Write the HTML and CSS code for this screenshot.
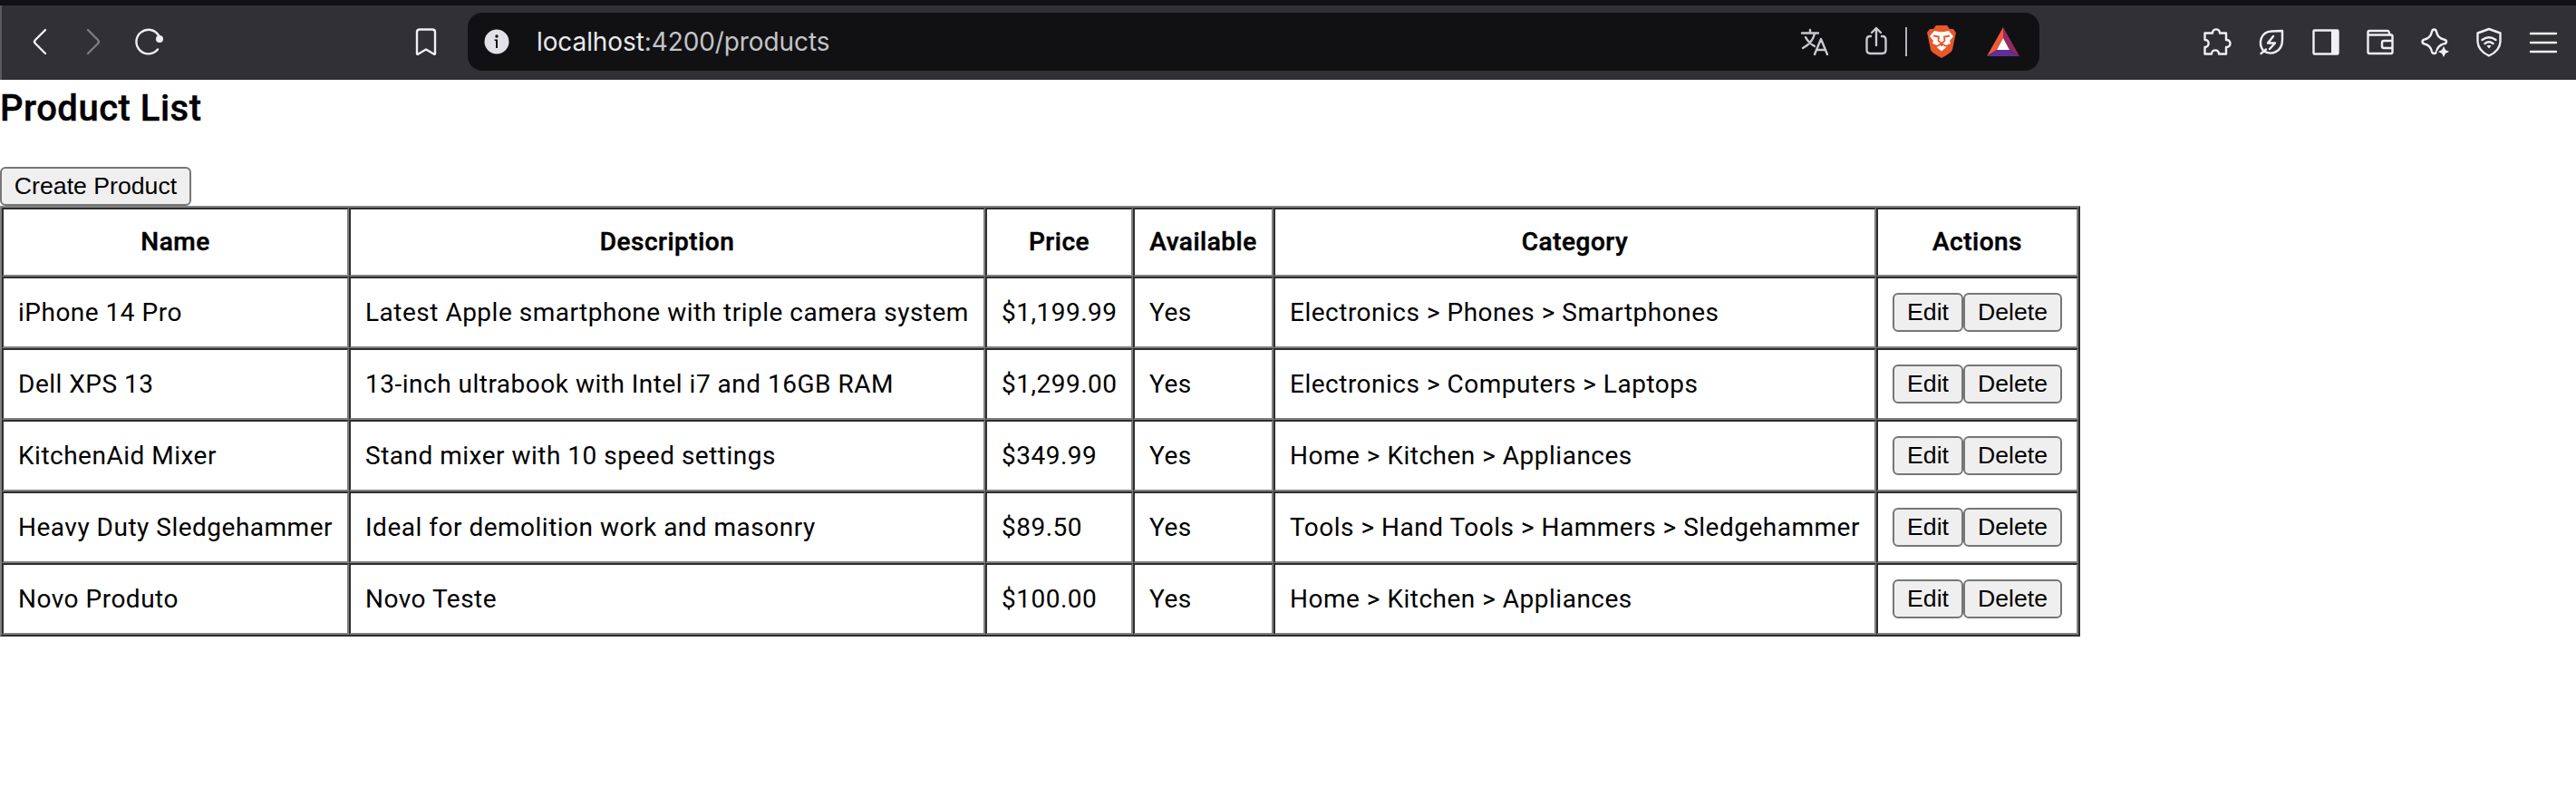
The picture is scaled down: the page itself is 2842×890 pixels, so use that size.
FILE: index.html
```html
<!DOCTYPE html>
<html lang="en">
<head>
<meta charset="utf-8">
<title>Product List</title>
<link rel="stylesheet" href="styles.css">
</head>
<body>
<header class="toolbar">
  <div class="nav">
    <svg class="icon" viewBox="0 0 36 36"><path d="M24 6L13 17Q11 19 13 21L24 32" transform="translate(0 -1)"/></svg>
    <svg class="icon dim" viewBox="0 0 36 36"><path d="M11 5L22 16Q24 18 22 20L11 31"/></svg>
    <svg class="icon" viewBox="0 0 36 36"><path d="M29 11A13.300 13.300 0 1 0 28 26.500"/><circle class="fill" cx="30" cy="15" r="4"/></svg>
  </div>
  <svg class="icon bookmark" viewBox="0 0 36 36"><path d="M8 7.500Q8 4.500 11 4.500H25Q28 4.500 28 7.500V31Q28 32.500 26.500 31.500L18 26.500L9.500 31.500Q8 32.500 8 31Z"/></svg>
  <div class="address">
    <svg class="info" viewBox="0 0 28 28"><circle cx="14" cy="14" r="13.500"/><circle class="dark" cx="14" cy="8" r="1.700"/><path class="dark" d="M11.500 11.500H15V21H13V13H11.500Z"/></svg>
    <span class="url"><b>localhost</b>:4200/products</span>
    <svg class="icon translate" viewBox="0 0 36 36"><path d="M4 8.500H22M13 5V8.500M8 13Q11 19 18 23M18 9Q16 19 5 25M18 32L25 15L32 32M20.500 27H29.500"/></svg>
    <svg class="icon share" viewBox="0 0 36 36"><path d="M12 12H11Q7.500 12 7.500 16V27Q7.500 31 11.500 31H24.500Q28.500 31 28.500 27V16Q28.500 12 25 12H24M18 22V3M13 8L18 3L23 8"/></svg>
    <span class="divider"></span>
    <svg class="lion" viewBox="0 0 32 36"><path fill="#e9582b" d="M10 0H22L25 4L29 4L32 8L31 12L28 27Q27 30 16 36Q5 30 4 27L1 12L0 8L3 4L7 4Z"/><path fill="#fff" d="M8 6L13 7H19L24 6L29 12L25 17L26 20L21 22L16 19L11 22L6 20L7 17L3 12Z"/><path fill="#fff" d="M10.500 24L16 21.500L21.500 24L16 28.500Z"/><path fill="none" stroke="#e9582b" stroke-width="1.800" d="M7 11.500L13 12.500L12.500 17L16 20L19.500 17L19 12.500L25 11.500M16 19V23"/></svg>
    <svg class="triangle" viewBox="0 0 36 32"><path fill="#f0593a" d="M18 0V12L11 25L0 32Z"/><path fill="#942a63" d="M18 0L36 32L25 25L18 12Z"/><path fill="#5f3094" d="M0 32L11 25H25L36 32Z"/><path fill="#fff" d="M18 12L25 25H11Z"/></svg>
  </div>
  <div class="tools">
    <svg class="icon" viewBox="0 0 36 36"><path d="M4.500 10V8.500H13C13 3 21 3 21 8.500H28V16C34 15.500 34 24.500 28 24V31.500H20C20 26 12 26 12 31.500H4.500V24C10 24 10 15.500 4.500 16Z"/></svg>
    <svg class="icon" viewBox="0 0 36 36"><path d="M6.500 31L12 26.500M9 28C3 20 6 7 18 6.500L30 6V16C30 29 18 34 9 28M20 12L14 19.500H22L16 26"/></svg>
    <svg class="icon" viewBox="0 0 36 36"><rect x="4.500" y="5.500" width="27" height="26" rx="1"/><path class="fill" d="M24 5H32V32H24Z"/></svg>
    <svg class="icon" viewBox="0 0 36 36"><path d="M4.500 10.500V7.500Q4.500 6 6 6H26Q28 6 28.500 10.500M4.500 10.500H30Q31.500 10.500 31.500 12V29Q31.500 31 30 31H6Q4.500 31 4.500 29V10.500M31.500 17H22Q20 17 20 19V23Q20 25 22 25H31.500"/></svg>
    <svg class="icon" viewBox="0 0 36 36"><path d="M17.500 4.500Q19.500 4.500 20 7Q21.500 14 28 15.500Q31 16 31 18Q31 20 28 20.500Q21.500 22 20 29Q19.500 31 17.500 31Q15.500 31 15 29Q13.500 22 7 20.500Q4.500 20 4.500 18Q4.500 16 7 15.500Q13.500 14 15 7Q15.500 4.500 17.500 4.500Z"/><path class="gap" d="M28 23L30 27L34 29L30 31L28 35L26 31L22 29L26 27Z"/><path class="fill" d="M28 23L30 27L34 29L30 31L28 35L26 31L22 29L26 27Z"/></svg>
    <svg class="icon" viewBox="0 0 36 36"><path d="M18 4L30.500 8.500V18Q30 28 18 33.500Q6 28 5.500 18V8.500ZM10.500 16Q18 10.500 25.500 16M13.500 20Q18 16.500 22.500 20"/><path class="fill" d="M15.500 22.500Q18 21 20.500 22.500L18 25.500Z"/></svg>
    <svg class="icon" viewBox="0 0 36 36"><path d="M4 9H32M4 19H32M4 29H32"/></svg>
  </div>
</header>
<main>
  <h2 class="title">Product List</h2>
  <button class="btn create">Create Product</button>
  <table class="products">
    <colgroup><col class="c-name"><col class="c-desc"><col class="c-price"><col class="c-avail"><col class="c-cat"><col class="c-act"></colgroup>
    <thead><tr><th>Name</th><th>Description</th><th>Price</th><th>Available</th><th>Category</th><th>Actions</th></tr></thead>
    <tbody>
      <tr><td>iPhone 14 Pro</td><td>Latest Apple smartphone with triple camera system</td><td>$1,199.99</td><td>Yes</td><td>Electronics &gt; Phones &gt; Smartphones</td><td><div class="actions"><button class="btn edit">Edit</button><button class="btn delete">Delete</button></div></td></tr>
      <tr><td>Dell XPS 13</td><td>13-inch ultrabook with Intel i7 and 16GB RAM</td><td>$1,299.00</td><td>Yes</td><td>Electronics &gt; Computers &gt; Laptops</td><td><div class="actions"><button class="btn edit">Edit</button><button class="btn delete">Delete</button></div></td></tr>
      <tr><td>KitchenAid Mixer</td><td>Stand mixer with 10 speed settings</td><td>$349.99</td><td>Yes</td><td>Home &gt; Kitchen &gt; Appliances</td><td><div class="actions"><button class="btn edit">Edit</button><button class="btn delete">Delete</button></div></td></tr>
      <tr><td>Heavy Duty Sledgehammer</td><td>Ideal for demolition work and masonry</td><td>$89.50</td><td>Yes</td><td>Tools &gt; Hand Tools &gt; Hammers &gt; Sledgehammer</td><td><div class="actions"><button class="btn edit">Edit</button><button class="btn delete">Delete</button></div></td></tr>
      <tr><td>Novo Produto</td><td>Novo Teste</td><td>$100.00</td><td>Yes</td><td>Home &gt; Kitchen &gt; Appliances</td><td><div class="actions"><button class="btn edit">Edit</button><button class="btn delete">Delete</button></div></td></tr>
    </tbody>
  </table>
</main>
</body>
</html>
```
FILE: styles.css
```css
* { box-sizing: border-box; }
body { margin: 0; background: #fff; color: #000; font-family: Roboto, sans-serif; }
.toolbar { display: flex; align-items: flex-start; height: 88px; padding: 8px 18px 0 26px; background: linear-gradient(90deg, #5a5a5d 2px, #313035 2px); border-top: 6px solid #111113; }
.icon { width: 36px; height: 36px; flex: none; fill: none; stroke: #f0f0f3; stroke-width: 2.4; stroke-linecap: round; stroke-linejoin: round; }
.icon .fill { fill: #f0f0f3; stroke: none; }
.icon .gap { fill: #313035; stroke: #313035; stroke-width: 3; }
.dim { stroke: #7c7c80; }
.nav { display: flex; gap: 24px; padding-top: 14px; width: 426px; }
.bookmark { margin-top: 14px; }
.address { display: flex; align-items: center; width: 1734px; height: 64px; margin-left: 28px; padding-left: 18px; border-radius: 16px; background: #111113; }
.info { width: 28px; height: 28px; fill: #e2e1e8; }
.info .dark { fill: #111113; }
.url { flex: 1; margin-left: 30px; font: 28px/64px Inter, sans-serif; letter-spacing: -0.1px; color: #c4c4c7; }
.url b { font-weight: 400; color: #e8e8eb; }
.translate, .share { stroke: #c9c9cd; }
.share { margin-left: 32px; }
.divider { width: 2px; height: 32px; margin-left: 14px; background: #b5b5b9; }
.lion { width: 32px; height: 36px; margin-left: 22px; }
.triangle { width: 36px; height: 32px; margin: 0 22px 0 34px; }
.tools { display: flex; gap: 24px; margin-left: auto; padding-top: 14px; }
.title { margin: 0; height: 96px; padding-top: 8px; font-size: 40px; line-height: 48px; font-weight: 500; letter-spacing: 0.5px; -webkit-text-stroke: 0.4px #000; }
.btn { height: 43px; padding: 0 0 2px; border: 2px solid #767676; border-radius: 6px; background: #efefef; color: #000; font: 26.667px/36px "Liberation Sans", Arial, sans-serif; white-space: nowrap; }
.create { display: block; width: 211px; }
.products { table-layout: fixed; width: 2295px; border-collapse: separate; border-spacing: 0; border: 2px solid; border-color: #808080 #2d2d2d #2d2d2d #808080; font-size: 28px; line-height: 40px; letter-spacing: 0.5px; }
.products th, .products td { height: 79px; padding: 0 16px; border: 2px solid; border-color: #2d2d2d #808080 #808080 #2d2d2d; white-space: nowrap; text-align: left; }
.products th { height: 76px; text-align: center; font-weight: 500; -webkit-text-stroke: 0.5px #000; }
.c-name { width: 383px; }
.c-desc { width: 702px; }
.c-price { width: 163px; }
.c-avail { width: 155px; }
.c-cat { width: 665px; }
.c-act { width: 223px; }
.actions { display: flex; }
.edit { width: 78px; }
.delete { width: 109px; }
```
